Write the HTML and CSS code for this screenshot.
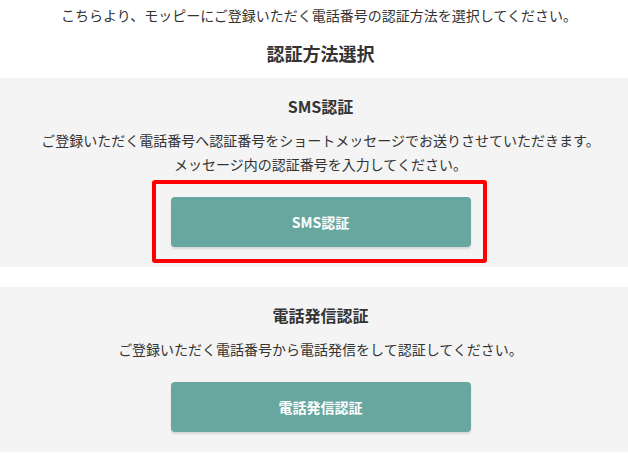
FILE: index.html
```html
<!DOCTYPE html>
<html lang="ja">
<head>
<meta charset="utf-8">
<title>認証方法選択</title>
<link rel="stylesheet" href="styles.css">
</head>
<body>
<p class="lead">こちらより、モッピーにご登録いただく電話番号の認証方法を選択してください。</p>
<h2 class="heading">認証方法選択</h2>
<section class="method">
  <h3 class="method-title">SMS認証</h3>
  <p class="method-desc">ご登録いただく電話番号へ認証番号をショートメッセージでお送りさせていただきます。<br>メッセージ内の認証番号を入力してください。</p>
  <div class="btn-wrap">
    <button class="btn" type="button">SMS認証</button>
    <span class="highlight"></span>
  </div>
</section>
<section class="method">
  <h3 class="method-title">電話発信認証</h3>
  <p class="method-desc">ご登録いただく電話番号から電話発信をして認証してください。</p>
  <div class="btn-wrap">
    <button class="btn" type="button">電話発信認証</button>
  </div>
</section>
</body>
</html>
```
FILE: styles.css
```css
html, body {
  margin: 0;
  padding: 0;
  background: #fff;
}
body {
  font-family: "Noto Sans CJK JP", "Noto Sans", sans-serif;
  color: #333;
  text-align: center;
}
.lead {
  margin: 0;
  padding: 4px 0 0 10px;
  font-size: 14px;
  line-height: 22px;
}
.heading {
  margin: 14px 0 12px;
  padding-left: 13px;
  font-size: 18px;
  line-height: 26px;
  font-weight: bold;
}
.method {
  background: #f4f4f4;
  padding: 16px 0 20px 13px;
  margin-bottom: 20px;
}
.method-title {
  margin: 0;
  font-size: 16px;
  line-height: 24px;
  font-weight: bold;
}
.method-desc {
  margin: 10px 0 0;
  font-size: 14px;
  line-height: 24px;
}
.btn-wrap {
  position: relative;
  width: 300px;
  margin: 21px auto 0;
}
.btn {
  display: block;
  width: 300px;
  height: 50px;
  border: none;
  border-radius: 4px;
  background: #68a79f;
  color: #fff;
  font-family: inherit;
  font-size: 14px;
  font-weight: bold;
  box-shadow: 0 2px 2px rgba(0, 0, 0, 0.12);
  cursor: pointer;
}
.highlight {
  position: absolute;
  left: -19px;
  right: -16px;
  top: -17px;
  bottom: -16px;
  border: 4px solid #f00;
  border-radius: 3px;
  pointer-events: none;
}
```
